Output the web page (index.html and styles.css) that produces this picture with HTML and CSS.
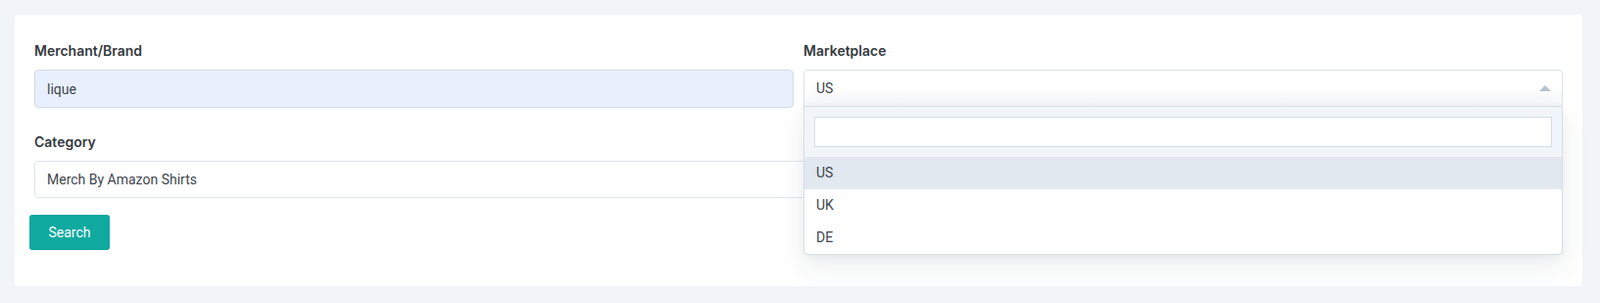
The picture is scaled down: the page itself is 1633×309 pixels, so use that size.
FILE: index.html
```html
<!DOCTYPE html>
<html lang="en">

<head>
    <meta charset="UTF-8">
    <meta name="viewport" content="width=device-width, initial-scale=1.0">
    <title>Search</title>
    <link rel="stylesheet" href="styles.css">
</head>

<body>
    <div class="card">
        <form class="search-form">
            <div class="row">
                <div class="form-group">
                    <label for="merchant">Merchant/Brand</label>
                    <input type="text" id="merchant" class="filled" value="lique">
                </div>
                <div class="form-group">
                    <label>Marketplace</label>
                    <div class="select open">
                        <div class="select-head">
                            <span>US</span>
                            <span class="arrow"></span>
                        </div>
                        <div class="select-drop">
                            <div class="drop-search">
                                <input type="text">
                            </div>
                            <ul class="options">
                                <li class="active">US</li>
                                <li>UK</li>
                                <li>DE</li>
                            </ul>
                        </div>
                    </div>
                </div>
            </div>

            <div class="form-group wide">
                <label for="category">Category</label>
                <input type="text" id="category" value="Merch By Amazon Shirts">
            </div>

            <button type="submit">Search</button>
        </form>
    </div>
</body>

</html>
```

FILE: styles.css
```css
body {
    margin: 0;
    padding: 15px 18px 17px 15px;
    background-color: #f1f4f8;
    font-family: Roboto, "Liberation Sans", sans-serif;
    font-size: 14px;
    color: #3e464e;
}

.card {
    background-color: white;
    border-radius: 3px;
    padding: 27px 15px 37px 15px;
}

.row {
    display: grid;
    grid-template-columns: 1fr 1fr;
}

.form-group {
    padding: 0 5px;
    margin-bottom: 25px;
}

.form-group.wide {
    margin-bottom: 17px;
}

label {
    display: block;
    font-family: Inter, Roboto, sans-serif;
    font-weight: 600;
    line-height: 20px;
    margin-bottom: 9px;
    color: #343a40;
}

input[type="text"] {
    box-sizing: border-box;
    display: block;
    width: 100%;
    height: 38px;
    padding: 0 12px;
    border: 1px solid #dfe4ea;
    border-radius: 4px;
    background-color: white;
    font-family: inherit;
    font-size: 14px;
    color: #3e464e;
}

input.filled {
    height: 39px;
    background-color: #e8f0fe;
    border-color: #d3dbe4;
}

.select {
    position: relative;
}

.select-head {
    box-sizing: border-box;
    height: 38px;
    display: flex;
    align-items: center;
    justify-content: space-between;
    padding: 0 11px 0 12px;
    border: 1px solid #dde3ea;
    border-radius: 4px 4px 0 0;
    background: linear-gradient(#ffffff 40%, #f5f6f7);
}

.arrow {
    width: 0;
    height: 0;
    border-left: 6px solid transparent;
    border-right: 6px solid transparent;
    border-bottom: 6px solid #b3c4cf;
}

.select-drop {
    position: absolute;
    top: 37px;
    left: 0;
    right: 0;
    z-index: 10;
    background-color: white;
    border: 1px solid #d5dee6;
    border-radius: 0 0 4px 4px;
    box-shadow: 0 12px 30px rgba(40, 50, 60, 0.08), 0 4px 10px rgba(40, 50, 60, 0.05);
}

.drop-search {
    padding: 10px;
    background-color: #f1f5f9;
}

.drop-search input[type="text"] {
    height: 31px;
    border: 1px solid #d3dde5;
    border-radius: 0;
}

.options {
    list-style: none;
    margin: 0;
    padding: 0;
}

.options li {
    height: 33px;
    line-height: 33px;
    padding: 0 12px;
    color: #3e464e;
}

.options li.active {
    background-color: #e2e8f0;
}

button {
    width: 82px;
    height: 36px;
    border: none;
    border-radius: 3px;
    background-color: #0fa99f;
    color: white;
    font-family: inherit;
    font-size: 14px;
    cursor: pointer;
}

button:hover {
    background-color: #0b9289;
}
```
